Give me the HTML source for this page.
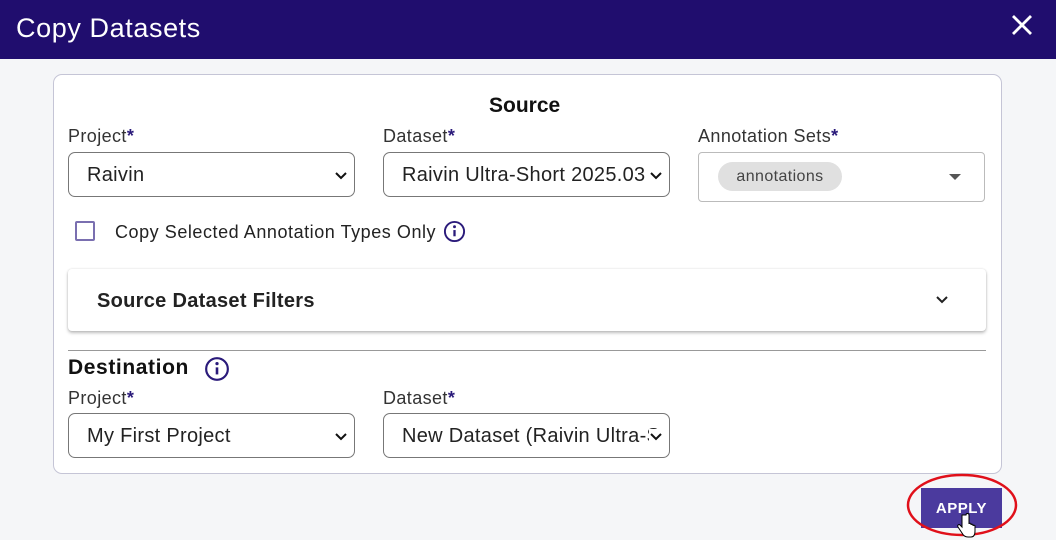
<!DOCTYPE html>
<html><head><style>
*{box-sizing:border-box;margin:0;padding:0}
body{width:1056px;height:540px;background:#f5f6f8;font-family:"Liberation Sans","DejaVu Sans",sans-serif;position:relative;overflow:hidden;color:#222}
.hdr{position:absolute;left:0;top:0;width:1056px;height:59px;background:#200d6e;color:#fff;font-size:27px;padding:13px 0 0 16px;letter-spacing:.6px}
.x{position:absolute;right:22px;top:13px;width:24px;height:24px}
.card{position:absolute;left:53px;top:74px;width:949px;height:400px;background:#fff;border:1px solid #c5c5d6;border-radius:9px}
.a{position:absolute}
.lbl{font-size:18px;color:#333;letter-spacing:.4px}
.lbl b{color:#2a1a7a}
.sel{position:absolute;height:45px;border:1px solid #777;border-radius:7px;background:#fff;font-size:20px;padding:11px 0 0 18px;color:#222;overflow:hidden;white-space:nowrap;letter-spacing:.3px}
.sel .chev{position:absolute;right:6px;top:15px;width:14px;height:14px;background:#fff}
</style></head><body>
<div class="hdr">Copy Datasets
<svg class="x" viewBox="0 0 24 24"><path d="M3 3L21 21M21 3L3 21" stroke="#fff" stroke-width="2.8"/></svg></div>
<div class="card"></div>
<div class="a" style="left:489px;top:94px;font-size:21px;font-weight:bold;color:#111">Source</div>
<div class="a lbl" style="left:68px;top:126px">Project<b>*</b></div>
<div class="a lbl" style="left:383px;top:126px">Dataset<b>*</b></div>
<div class="a lbl" style="left:698px;top:126px">Annotation Sets<b>*</b></div>
<div class="sel" style="left:68px;top:152px;width:287px">Raivin<svg class="chev" viewBox="0 0 14 14"><path d="M2 5L7 10L12 5" fill="none" stroke="#111" stroke-width="2"/></svg></div>
<div class="sel" style="left:383px;top:152px;width:287px">Raivin Ultra-Short 2025.03<svg class="chev" viewBox="0 0 14 14"><path d="M2 5L7 10L12 5" fill="none" stroke="#111" stroke-width="2"/></svg></div>
<div class="a" style="left:698px;top:152px;width:287px;height:50px;border:1px solid #bbb;border-radius:4px;background:#fff"></div>
<div class="a" style="left:718px;top:162px;width:124px;height:29px;border-radius:15px;background:#e0e0e0;font-size:16px;color:#444;text-align:center;padding-top:6px;letter-spacing:.4px">annotations</div>
<svg class="a" style="left:947px;top:172px" width="16" height="10" viewBox="0 0 16 10"><path d="M2 2L8 8L14 2Z" fill="#555"/></svg>
<div class="a" style="left:75px;top:221px;width:20px;height:20px;border:2px solid #7a6fb0;border-radius:2px"></div>
<div class="a" style="left:115px;top:222px;font-size:18px;color:#222;letter-spacing:.55px">Copy Selected Annotation Types Only</div>
<svg class="a" style="left:443px;top:220px" width="23" height="23" viewBox="0 0 24 24"><circle cx="12" cy="12" r="10" fill="none" stroke="#2a1a7a" stroke-width="2"/><path d="M12 10.5V17" stroke="#2a1a7a" stroke-width="2.4"/><circle cx="12" cy="7" r="1.5" fill="#2a1a7a"/></svg>
<div class="a" style="left:68px;top:269px;width:918px;height:62px;background:#fff;border-radius:4px;box-shadow:0 2px 3px rgba(0,0,0,.25),0 0 2px rgba(0,0,0,.12)"></div>
<div class="a" style="left:97px;top:290px;font-size:20px;font-weight:bold;color:#222;letter-spacing:.3px">Source Dataset Filters</div>
<svg class="a" style="left:934px;top:294px" width="16" height="12" viewBox="0 0 16 12"><path d="M3 3L8 8L13 3" fill="none" stroke="#222" stroke-width="2"/></svg>
<div class="a" style="left:68px;top:350px;width:918px;height:1px;background:#999"></div>
<div class="a" style="left:68px;top:356px;font-size:21px;font-weight:bold;color:#111;letter-spacing:.6px">Destination</div>
<svg class="a" style="left:204px;top:356px" width="26" height="26" viewBox="0 0 24 24"><circle cx="12" cy="12" r="10" fill="none" stroke="#2a1a7a" stroke-width="2"/><path d="M12 10.5V17" stroke="#2a1a7a" stroke-width="2.4"/><circle cx="12" cy="7" r="1.5" fill="#2a1a7a"/></svg>
<div class="a lbl" style="left:68px;top:388px">Project<b>*</b></div>
<div class="a lbl" style="left:383px;top:388px">Dataset<b>*</b></div>
<div class="sel" style="left:68px;top:413px;width:287px">My First Project<svg class="chev" viewBox="0 0 14 14"><path d="M2 5L7 10L12 5" fill="none" stroke="#111" stroke-width="2"/></svg></div>
<div class="sel" style="left:383px;top:413px;width:287px">New Dataset (Raivin Ultra-S<svg class="chev" viewBox="0 0 14 14"><path d="M2 5L7 10L12 5" fill="none" stroke="#111" stroke-width="2"/></svg></div>
<div class="a" style="left:921px;top:488px;width:81px;height:40px;background:#4b3a9e;color:#fff;font-size:15px;font-weight:bold;text-align:center;padding-top:12px;letter-spacing:.5px">APPLY</div>
<svg class="a" style="left:905px;top:472px" width="114" height="66" viewBox="0 0 114 66"><ellipse cx="57" cy="33" rx="54" ry="30" fill="none" stroke="#e0101a" stroke-width="2.5"/></svg>
<svg class="a" style="left:957px;top:513px" width="20" height="26" viewBox="0 0 20 26"><path d="M5 2v12l-2-2c-1-1-3 0-2 2l4 6c1 2 3 4 6 4h3c3 0 4-3 4-6v-5c0-1-2-1-2 0v-1c0-1-2-1-2 0v-1c0-1-2-1-2 0V2c0-2-3-2-3 0z" fill="#fff" stroke="#000" stroke-width="1"/></svg>
</body></html>
